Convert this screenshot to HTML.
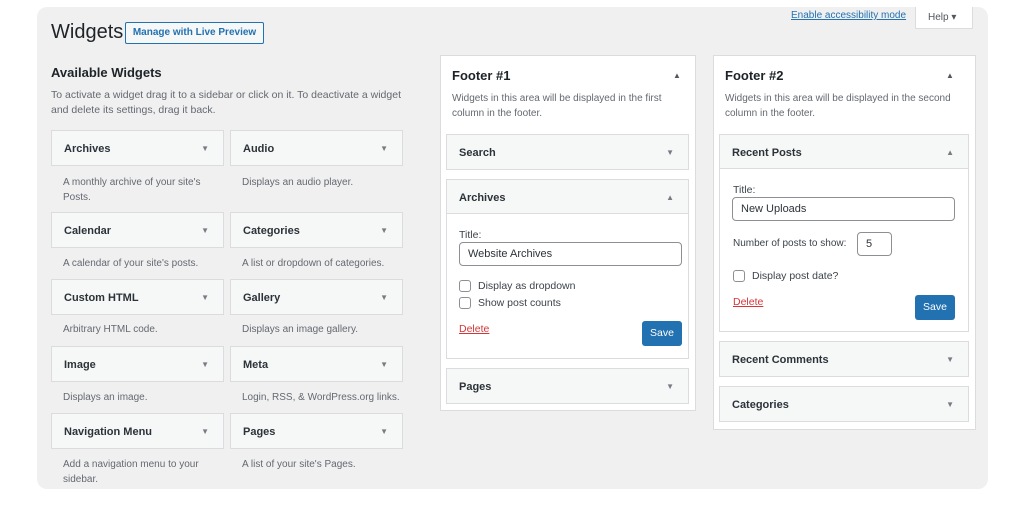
<!DOCTYPE html>
<html><head><meta charset="utf-8"><style>
*{box-sizing:border-box;margin:0;padding:0}
body{width:1024px;height:505px;background:#fff;font-family:"Liberation Sans",sans-serif;color:#3c434a;position:relative;overflow:hidden}
.panel{position:absolute;left:37px;top:7px;width:951px;height:482px;background:#f0f0f1;border-radius:10px}
.a{position:absolute}
.tile{position:absolute;background:#f6f7f7;border:1px solid #dcdcde;height:36px;font-size:11px;font-weight:bold;color:#2c3338;padding:12px 0 0 12px}
.tile .ar{position:absolute;right:14px;top:13px;font-size:8px;color:#787c82;font-weight:normal}
.desc{position:absolute;font-size:10px;color:#646970;line-height:15px}
.box{position:absolute;background:#fff;border:1px solid #dcdcde}
.h{font-size:13px;font-weight:bold;color:#1d2327}
.inp{position:absolute;border:1px solid #8c8f94;border-radius:4px;background:#fff;font-size:11px;padding:5px 8px;color:#2c3338}
.cb{position:absolute;width:12px;height:12px;border:1px solid #8c8f94;border-radius:3px;background:#fff}
.t{position:absolute;font-size:10.5px;color:#3c434a}
.del{position:absolute;font-size:10.5px;color:#d63638;text-decoration:underline}
.save{position:absolute;background:#2271b1;color:#fff;font-size:10.5px;border-radius:3px;width:40px;height:25px;text-align:center;line-height:25px}
</style></head><body>
<div class="panel"></div>
<div class="a" style="left:51px;top:21px;font-size:20px;color:#1d2327">Widgets</div>
<div class="a" style="left:125px;top:22px;width:139px;height:22px;border:1px solid #2271b1;border-radius:2px;background:#f6f7f7;color:#2271b1;font-size:10px;font-weight:bold;text-align:center;line-height:20px;white-space:nowrap">Manage with Live Preview</div>
<div class="a" style="left:791px;top:10px;font-size:10px;color:#2271b1;text-decoration:underline">Enable accessibility mode</div>
<div class="a" style="left:915px;top:7px;width:58px;height:22px;background:#fff;border:1px solid #dcdcde;border-top:none;font-size:10px;color:#50575e;padding:5px 0 0 12px">Help ▾</div>
<div class="a h" style="left:51px;top:65px;font-size:13px">Available Widgets</div>
<div class="desc" style="left:51px;top:88px;font-size:10.5px;width:360px">To activate a widget drag it to a sidebar or click on it. To deactivate a widget and delete its settings, drag it back.</div>

<div class="tile" style="left:51px;top:130px;width:173px">Archives<span class="ar">▼</span></div>
<div class="tile" style="left:230px;top:130px;width:173px">Audio<span class="ar">▼</span></div>
<div class="desc" style="left:63px;top:175px;width:150px">A monthly archive of your site's Posts.</div>
<div class="desc" style="left:242px;top:175px">Displays an audio player.</div>
<div class="tile" style="left:51px;top:212px;width:173px">Calendar<span class="ar">▼</span></div>
<div class="tile" style="left:230px;top:212px;width:173px">Categories<span class="ar">▼</span></div>
<div class="desc" style="left:63px;top:256px">A calendar of your site's posts.</div>
<div class="desc" style="left:242px;top:256px">A list or dropdown of categories.</div>
<div class="tile" style="left:51px;top:279px;width:173px">Custom HTML<span class="ar">▼</span></div>
<div class="tile" style="left:230px;top:279px;width:173px">Gallery<span class="ar">▼</span></div>
<div class="desc" style="left:63px;top:322px">Arbitrary HTML code.</div>
<div class="desc" style="left:242px;top:322px">Displays an image gallery.</div>
<div class="tile" style="left:51px;top:346px;width:173px">Image<span class="ar">▼</span></div>
<div class="tile" style="left:230px;top:346px;width:173px">Meta<span class="ar">▼</span></div>
<div class="desc" style="left:63px;top:390px">Displays an image.</div>
<div class="desc" style="left:242px;top:390px">Login, RSS, &amp; WordPress.org links.</div>
<div class="tile" style="left:51px;top:413px;width:173px">Navigation Menu<span class="ar">▼</span></div>
<div class="tile" style="left:230px;top:413px;width:173px">Pages<span class="ar">▼</span></div>
<div class="desc" style="left:63px;top:457px;width:150px">Add a navigation menu to your sidebar.</div>
<div class="desc" style="left:242px;top:457px">A list of your site's Pages.</div>

<!-- Footer 1 -->
<div class="box" style="left:440px;top:55px;width:256px;height:356px"></div>
<div class="a h" style="left:452px;top:68px">Footer #1</div>
<div class="a" style="left:673px;top:71px;font-size:8px;color:#50575e">▲</div>
<div class="desc" style="left:452px;top:91px;width:235px">Widgets in this area will be displayed in the first column in the footer.</div>
<div class="tile" style="left:446px;top:134px;width:243px">Search<span class="ar">▼</span></div>
<div class="box" style="left:446px;top:179px;width:243px;height:180px"></div>
<div class="tile" style="left:446px;top:179px;width:243px;height:35px">Archives<span class="ar">▲</span></div>
<div class="t" style="left:459px;top:229px">Title:</div>
<div class="inp" style="left:459px;top:242px;width:223px;height:24px">Website Archives</div>
<div class="cb" style="left:459px;top:280px"></div><div class="t" style="left:478px;top:280px">Display as dropdown</div>
<div class="cb" style="left:459px;top:297px"></div><div class="t" style="left:478px;top:297px">Show post counts</div>
<div class="del" style="left:459px;top:323px">Delete</div>
<div class="save" style="left:642px;top:321px">Save</div>
<div class="tile" style="left:446px;top:368px;width:243px">Pages<span class="ar">▼</span></div>

<!-- Footer 2 -->
<div class="box" style="left:713px;top:55px;width:263px;height:375px"></div>
<div class="a h" style="left:725px;top:68px">Footer #2</div>
<div class="a" style="left:946px;top:71px;font-size:8px;color:#50575e">▲</div>
<div class="desc" style="left:725px;top:91px;width:245px">Widgets in this area will be displayed in the second column in the footer.</div>
<div class="box" style="left:719px;top:134px;width:250px;height:198px"></div>
<div class="tile" style="left:719px;top:134px;width:250px;height:35px">Recent Posts<span class="ar">▲</span></div>
<div class="t" style="left:733px;top:184px">Title:</div>
<div class="inp" style="left:732px;top:197px;width:223px;height:24px">New Uploads</div>
<div class="t" style="left:733px;top:238px;font-size:10px">Number of posts to show:</div>
<div class="inp" style="left:857px;top:232px;width:35px;height:24px">5</div>
<div class="cb" style="left:733px;top:270px"></div><div class="t" style="left:752px;top:270px">Display post date?</div>
<div class="del" style="left:733px;top:296px">Delete</div>
<div class="save" style="left:915px;top:295px">Save</div>
<div class="tile" style="left:719px;top:341px;width:250px">Recent Comments<span class="ar">▼</span></div>
<div class="tile" style="left:719px;top:386px;width:250px">Categories<span class="ar">▼</span></div>
</body></html>
